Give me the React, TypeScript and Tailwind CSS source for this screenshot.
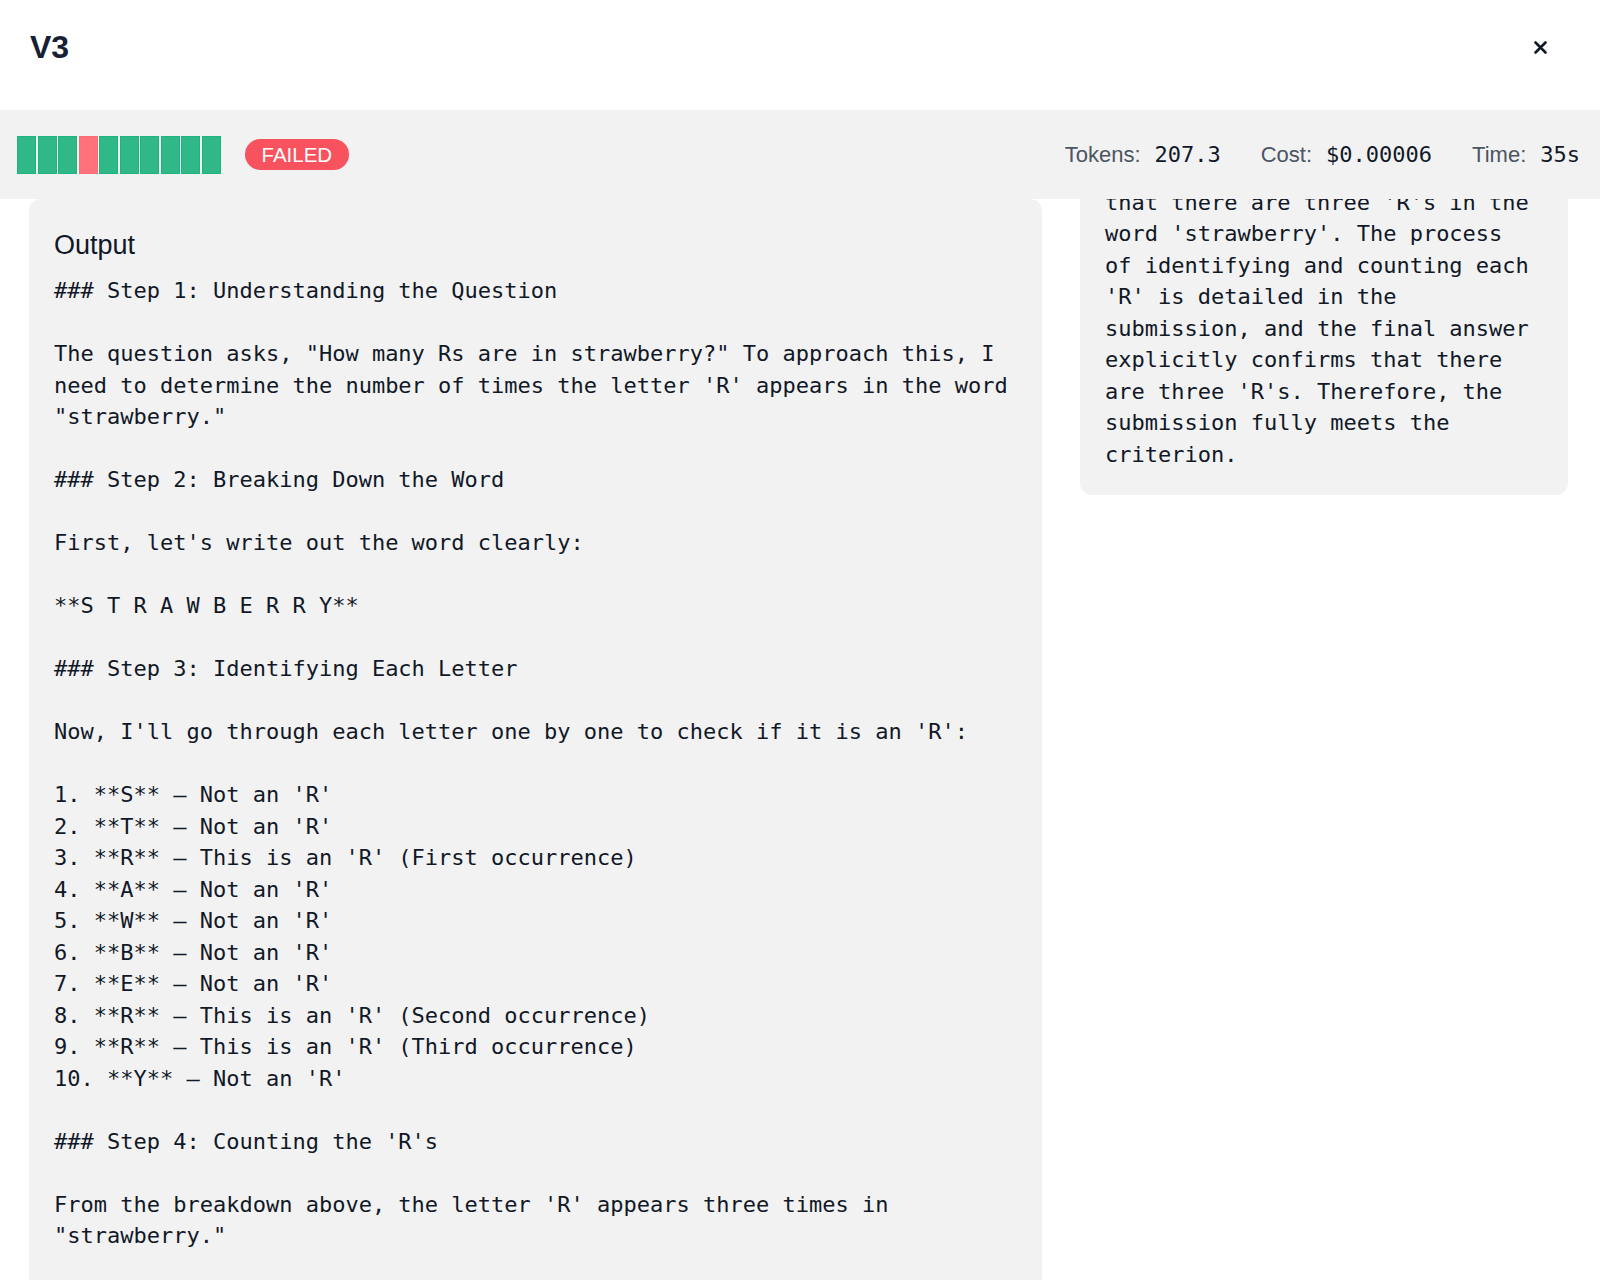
import React from "react";

// One entry per test run: true = passed, false = failed
const runs: boolean[] = [true, true, true, false, true, true, true, true, true, true];

const stats = [
    {label: "Tokens:", value: "207.3"},
    {label: "Cost:", value: "$0.00006"},
    {label: "Time:", value: "35s"}
];

const output = `### Step 1: Understanding the Question

The question asks, "How many Rs are in strawberry?" To approach this, I need to determine the number of times the letter 'R' appears in the word "strawberry."

### Step 2: Breaking Down the Word

First, let's write out the word clearly:

**S T R A W B E R R Y**

### Step 3: Identifying Each Letter

Now, I'll go through each letter one by one to check if it is an 'R':

1. **S** – Not an 'R'
2. **T** – Not an 'R'
3. **R** – This is an 'R' (First occurrence)
4. **A** – Not an 'R'
5. **W** – Not an 'R'
6. **B** – Not an 'R'
7. **E** – Not an 'R'
8. **R** – This is an 'R' (Second occurrence)
9. **R** – This is an 'R' (Third occurrence)
10. **Y** – Not an 'R'

### Step 4: Counting the 'R's

From the breakdown above, the letter 'R' appears three times in "strawberry."

### Step 5: Final Answer

There are **3** R's in "strawberry."`;

const reasoning =
    "The submission clearly concludes that there are three 'R's in the word 'strawberry'. The process of identifying and counting each 'R' is detailed in the submission, and the final answer explicitly confirms that there are three 'R's. Therefore, the submission fully meets the criterion.";

const mono = "font-['DejaVu_Sans_Mono','Liberation_Mono',monospace]";

const RunBar: React.FC<{runs: boolean[]}> = ({runs}) => (
    <div className="flex gap-[1.5px]">
        {runs.map((ok, i) => (
            <div
                key={i}
                className={
                    ok
                        ? "h-[38px] w-[19px] border border-[#1cb47f] bg-[#31b888]"
                        : "h-[38px] w-[19px] border border-[#ff6b76] bg-[#ff717b]"
                }
            />
        ))}
    </div>
);

export default function App() {
    return (
        <div className="min-h-screen bg-white font-['Liberation_Sans',Arial,sans-serif] text-[#111827]">
            {/* title row */}
            <div className="h-[110px] pt-[31px] pl-[30px] pr-[53px]">
                <div className="flex h-[32px] items-center justify-between">
                    <h1 className="text-[32px] font-bold leading-none text-[#172033]">V3</h1>
                    <button className="flex h-[14px] w-[14px] items-center justify-center text-[#111827]">
                        <svg width="13" height="13" viewBox="0 0 13 13" fill="none">
                            <path d="M1.5 1.5L11.5 11.5M11.5 1.5L1.5 11.5" stroke="currentColor" strokeWidth="2.6"
                                  strokeLinecap="round"/>
                        </svg>
                    </button>
                </div>
            </div>

            {/* status bar */}
            <div className="relative z-10 flex h-[89px] items-center justify-between bg-[#f2f2f2] pl-[17px] pr-[20px]">
                <div className="flex items-center gap-[24px]">
                    <RunBar runs={runs}/>
                    <span className="h-[31px] rounded-full bg-[#f7525d] px-[17px] text-[20.5px] leading-[31px] text-white">
                        FAILED
                    </span>
                </div>
                <div className="flex items-center gap-[40px] text-[22px] leading-[30px]">
                    {stats.map((s) => (
                        <div key={s.label} className="flex items-baseline gap-[14px]">
                            <span className="text-[#4b5563]">{s.label}</span>
                            <span className={`${mono} text-[#111827]`}>{s.value}</span>
                        </div>
                    ))}
                </div>
            </div>

            {/* content */}
            <div className="flex h-[1081px] items-start gap-[38px] overflow-hidden pl-[29px] pr-[32px]">
                <div className="w-[1013px] shrink-0 rounded-[12px] bg-[#f2f2f2] px-[25px] pt-[28px] pb-[40px]">
                    <h2 className="mb-[12px] text-[27px] leading-[36px] text-[#111827]">Output</h2>
                    <div className={`${mono} whitespace-pre-wrap break-words text-[22px] leading-[31.5px]`}>
                        {output}
                    </div>
                </div>
                <div className="-mt-[69px] flex-1 rounded-[12px] bg-[#f2f2f2] pt-[25px] pb-[25px] pl-[25px] pr-[32px]">
                    <p className={`${mono} text-[22px] leading-[31.5px]`}>{reasoning}</p>
                </div>
            </div>
        </div>
    );
}
